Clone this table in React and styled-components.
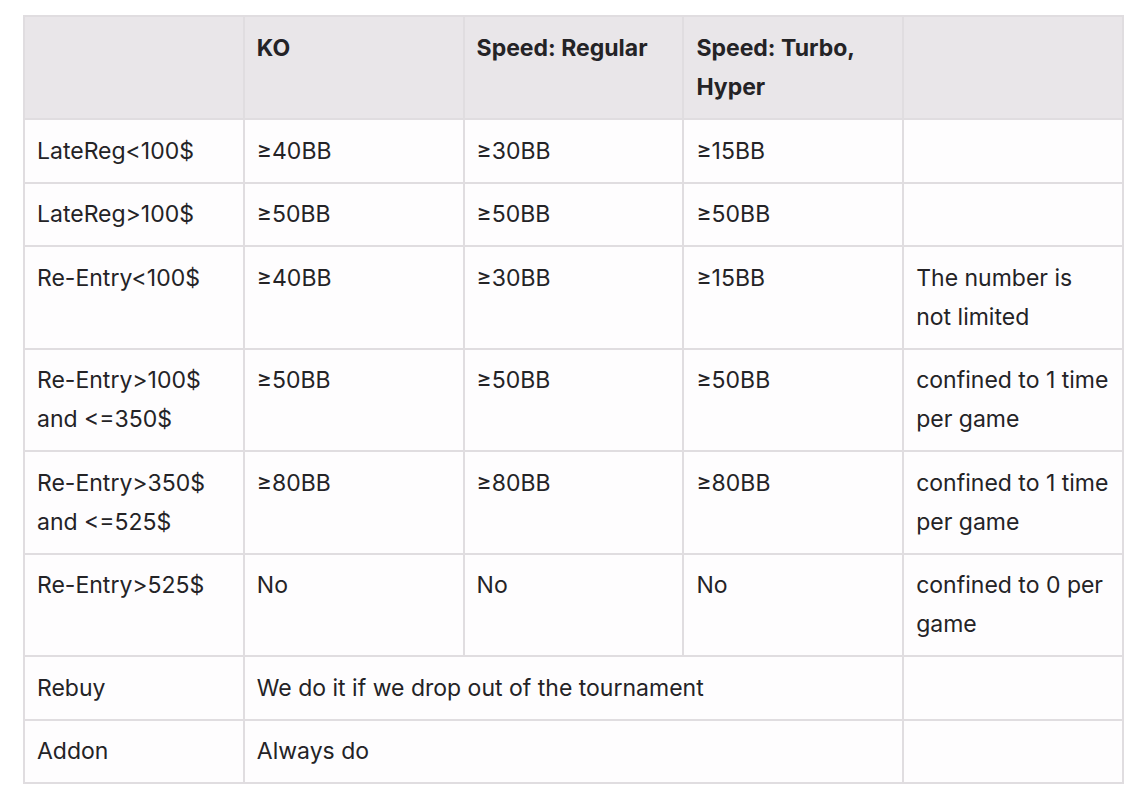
import React from 'react';
import styled, { createGlobalStyle } from 'styled-components';

const Global = createGlobalStyle`
  body {
    margin: 0;
    background: #ffffff;
    font-family: Inter, "Noto Sans", sans-serif;
    color: #222124;
  }
`;

const S = {
  Wrapper: styled.div`
    padding: 15px 22px 0 23px;
  `,
  Table: styled.table`
    width: 1101px;
    border-collapse: collapse;
    table-layout: fixed;
    background: #fefdfe;
    font-size: 23px;
    line-height: 39px;
  `,
  Head: styled.th`
    background: #e9e6e9;
    border: 2px solid #e0dde0;
    font-weight: 700;
    text-align: left;
    vertical-align: top;
    padding: 11.5px 12px;
    color: #242326;
  `,
  Cell: styled.td`
    border: 2px solid #e0dde0;
    vertical-align: top;
    padding: 11.5px 12px 11px;
    color: #242326;
    font-weight: 400;
  `,
};

const rows = [
  ['LateReg<100$', '≥40BB', '≥30BB', '≥15BB', ''],
  ['LateReg>100$', '≥50BB', '≥50BB', '≥50BB', ''],
  ['Re-Entry<100$', '≥40BB', '≥30BB', '≥15BB', 'The number is not limited'],
  ['Re-Entry>100$ and <=350$', '≥50BB', '≥50BB', '≥50BB', 'confined to 1 time per game'],
  ['Re-Entry>350$ and <=525$', '≥80BB', '≥80BB', '≥80BB', 'confined to 1 time per game'],
  ['Re-Entry>525$', 'No', 'No', 'No', 'confined to 0 per game'],
];

const App = () => {
  return (
    <>
      <Global />
      <S.Wrapper>
        <S.Table>
          <thead>
            <tr>
              <S.Head></S.Head>
              <S.Head>KO</S.Head>
              <S.Head>Speed: Regular</S.Head>
              <S.Head>Speed: Turbo, Hyper</S.Head>
              <S.Head></S.Head>
            </tr>
          </thead>
          <tbody>
            {rows.map((r, i) => (
              <tr key={i}>
                {r.map((c, j) => (
                  <S.Cell key={j}>{c}</S.Cell>
                ))}
              </tr>
            ))}
            <tr>
              <S.Cell>Rebuy</S.Cell>
              <S.Cell colSpan={3}>We do it if we drop out of the tournament</S.Cell>
              <S.Cell></S.Cell>
            </tr>
            <tr>
              <S.Cell>Addon</S.Cell>
              <S.Cell colSpan={3}>Always do</S.Cell>
              <S.Cell></S.Cell>
            </tr>
          </tbody>
        </S.Table>
      </S.Wrapper>
    </>
  );
};

export default App;
